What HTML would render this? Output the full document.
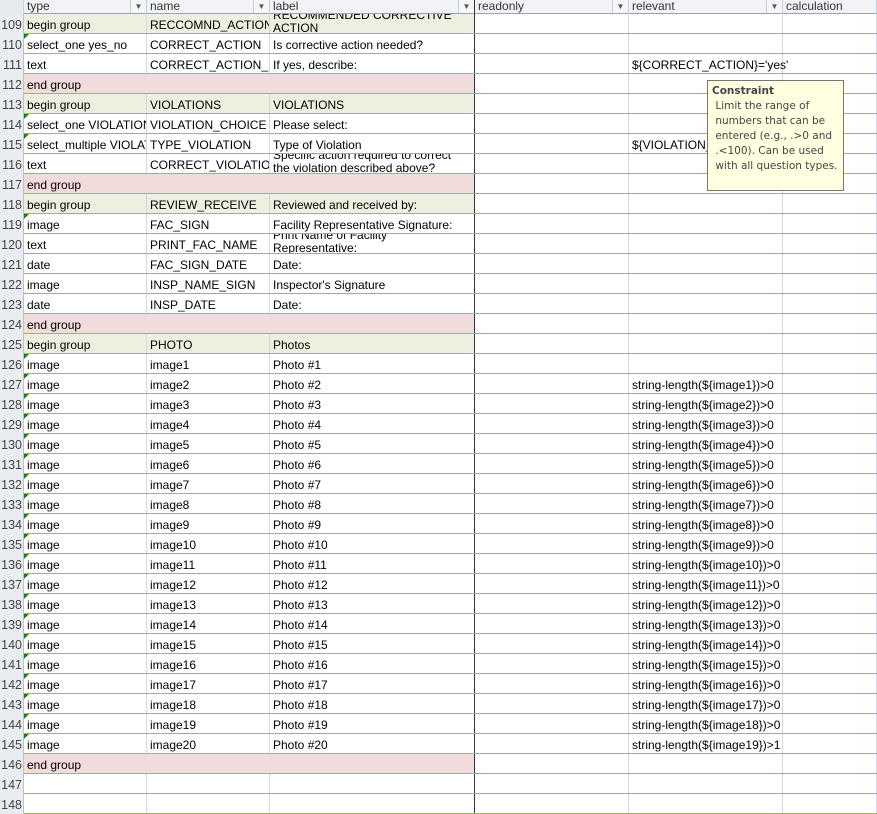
<!DOCTYPE html>
<html><head><meta charset="utf-8"><style>
body{margin:0;width:877px;height:806px;overflow:hidden;background:#fff;font-family:"Liberation Sans",Arial,sans-serif;font-size:12px;color:#000;position:relative}
.r{position:absolute;left:0;width:877px;height:20px;box-sizing:border-box;border-bottom:1px solid #9bbb59}
.c{position:absolute;top:0;height:19px;line-height:22px;box-sizing:border-box;border-right:1px solid #d5d9df;padding-left:3px;white-space:nowrap;overflow:hidden}
.h{left:0;width:24px;background:#e9ecf1;color:#444;font-size:12.5px;text-align:right;padding:0 1px 0 0;border-right:1px solid #b9c1cc;top:0;height:20px;line-height:23px}
.t{left:24px;width:123px}.n{left:147px;width:123px}.l{left:270px;width:205px;border-right:1px solid #333}
.ro{left:475px;width:154px}.rv{left:629px;width:154px;overflow:visible;z-index:1}.ca{left:783px;width:94px}
.bg .t,.bg .n,.bg .l{background:#ebf1de}
.eg .t,.eg .n,.eg .l{background:#f2dcdb}
.two{line-height:13px}
.two span{display:block;margin-top:-5px}
.tri{position:absolute;left:24px;top:0;width:0;height:0;border-top:5px solid #1e7a2a;border-right:5px solid transparent}
.hd{position:absolute;top:0;left:0;width:877px;height:14px;background:#f1f3f6;border-bottom:1px solid #9aa3ae;box-sizing:border-box;z-index:3}
.hc{position:absolute;top:0;height:14px;line-height:13px;box-sizing:border-box;border-right:1px solid #c8ced6;padding-left:3px;color:#333}
.dd{position:absolute;top:0;right:0;width:15px;height:13px;border-left:1px solid #c8ced6;background:#f5f6f8;font-size:8px;line-height:13px;text-align:center;color:#555}
.tip{position:absolute;z-index:5;left:707px;top:80px;width:137px;height:111px;background:#ffffe1;border:1px solid #767676;box-sizing:border-box;font-family:"DejaVu Sans",sans-serif;font-size:10.5px;line-height:15px;color:#444;padding:3px 4px}
</style></head><body>
<div class="hd">
<div class="hc" style="left:0;width:24px;background:#e6e9ee"></div>
<div class="hc" style="left:24px;width:123px">type<div class="dd">▼</div></div>
<div class="hc" style="left:147px;width:123px">name<div class="dd">▼</div></div>
<div class="hc" style="left:270px;width:205px;border-right:1px solid #333">label<div class="dd">▼</div></div>
<div class="hc" style="left:475px;width:154px">readonly<div class="dd">▼</div></div>
<div class="hc" style="left:629px;width:154px">relevant<div class="dd">▼</div></div>
<div class="hc" style="left:783px;width:94px">calculation</div>
</div>

<div class="r bg" style="top:14px"><div class="c h">109</div><div class="c t">begin group</div><div class="c n">RECCOMND_ACTION</div><div class="c l two"><span>RECOMMENDED CORRECTIVE<br>ACTION</span></div><div class="c ro"></div><div class="c ca"></div><div class="c rv"></div></div>
<div class="r" style="top:34px"><div class="c h">110</div><div class="c t">select_one yes_no</div><div class="tri"></div><div class="c n">CORRECT_ACTION</div><div class="c l">Is corrective action needed?</div><div class="c ro"></div><div class="c ca"></div><div class="c rv"></div></div>
<div class="r" style="top:54px"><div class="c h">111</div><div class="c t">text</div><div class="c n">CORRECT_ACTION_DESC</div><div class="c l">If yes, describe:</div><div class="c ro"></div><div class="c ca"></div><div class="c rv">${CORRECT_ACTION}='yes'</div></div>
<div class="r eg" style="top:74px"><div class="c h">112</div><div class="c t" style="width:451px;border-right:1px solid #333">end group</div><div class="c ro"></div><div class="c ca"></div><div class="c rv"></div></div>
<div class="r bg" style="top:94px"><div class="c h">113</div><div class="c t">begin group</div><div class="c n">VIOLATIONS</div><div class="c l">VIOLATIONS</div><div class="c ro"></div><div class="c ca"></div><div class="c rv"></div></div>
<div class="r" style="top:114px"><div class="c h">114</div><div class="c t">select_one VIOLATIONS</div><div class="tri"></div><div class="c n">VIOLATION_CHOICE</div><div class="c l">Please select:</div><div class="c ro"></div><div class="c ca"></div><div class="c rv"></div></div>
<div class="r" style="top:134px"><div class="c h">115</div><div class="c t">select_multiple VIOLATIONS</div><div class="tri"></div><div class="c n">TYPE_VIOLATION</div><div class="c l">Type of Violation</div><div class="c ro"></div><div class="c ca"></div><div class="c rv">${VIOLATION_CHOICE}</div></div>
<div class="r" style="top:154px"><div class="c h">116</div><div class="c t">text</div><div class="c n">CORRECT_VIOLATION</div><div class="c l two"><span>Specific action required to correct<br>the violation described above?</span></div><div class="c ro"></div><div class="c ca"></div><div class="c rv"></div></div>
<div class="r eg" style="top:174px"><div class="c h">117</div><div class="c t" style="width:451px;border-right:1px solid #333">end group</div><div class="c ro"></div><div class="c ca"></div><div class="c rv"></div></div>
<div class="r bg" style="top:194px"><div class="c h">118</div><div class="c t">begin group</div><div class="c n">REVIEW_RECEIVE</div><div class="c l">Reviewed and received by:</div><div class="c ro"></div><div class="c ca"></div><div class="c rv"></div></div>
<div class="r" style="top:214px"><div class="c h">119</div><div class="c t">image</div><div class="tri"></div><div class="c n">FAC_SIGN</div><div class="c l">Facility Representative Signature:</div><div class="c ro"></div><div class="c ca"></div><div class="c rv"></div></div>
<div class="r" style="top:234px"><div class="c h">120</div><div class="c t">text</div><div class="c n">PRINT_FAC_NAME</div><div class="c l two"><span>Print Name of Facility<br>Representative:</span></div><div class="c ro"></div><div class="c ca"></div><div class="c rv"></div></div>
<div class="r" style="top:254px"><div class="c h">121</div><div class="c t">date</div><div class="c n">FAC_SIGN_DATE</div><div class="c l">Date:</div><div class="c ro"></div><div class="c ca"></div><div class="c rv"></div></div>
<div class="r" style="top:274px"><div class="c h">122</div><div class="c t">image</div><div class="c n">INSP_NAME_SIGN</div><div class="c l">Inspector's Signature</div><div class="c ro"></div><div class="c ca"></div><div class="c rv"></div></div>
<div class="r" style="top:294px"><div class="c h">123</div><div class="c t">date</div><div class="c n">INSP_DATE</div><div class="c l">Date:</div><div class="c ro"></div><div class="c ca"></div><div class="c rv"></div></div>
<div class="r eg" style="top:314px"><div class="c h">124</div><div class="c t" style="width:451px;border-right:1px solid #333">end group</div><div class="c ro"></div><div class="c ca"></div><div class="c rv"></div></div>
<div class="r bg" style="top:334px"><div class="c h">125</div><div class="c t">begin group</div><div class="c n">PHOTO</div><div class="c l">Photos</div><div class="c ro"></div><div class="c ca"></div><div class="c rv"></div></div>
<div class="r" style="top:354px"><div class="c h">126</div><div class="c t">image</div><div class="tri"></div><div class="c n">image1</div><div class="c l">Photo #1</div><div class="c ro"></div><div class="c ca"></div><div class="c rv"></div></div>
<div class="r" style="top:374px"><div class="c h">127</div><div class="c t">image</div><div class="tri"></div><div class="c n">image2</div><div class="c l">Photo #2</div><div class="c ro"></div><div class="c ca"></div><div class="c rv">string-length(${image1})&gt;0</div></div>
<div class="r" style="top:394px"><div class="c h">128</div><div class="c t">image</div><div class="tri"></div><div class="c n">image3</div><div class="c l">Photo #3</div><div class="c ro"></div><div class="c ca"></div><div class="c rv">string-length(${image2})&gt;0</div></div>
<div class="r" style="top:414px"><div class="c h">129</div><div class="c t">image</div><div class="tri"></div><div class="c n">image4</div><div class="c l">Photo #4</div><div class="c ro"></div><div class="c ca"></div><div class="c rv">string-length(${image3})&gt;0</div></div>
<div class="r" style="top:434px"><div class="c h">130</div><div class="c t">image</div><div class="tri"></div><div class="c n">image5</div><div class="c l">Photo #5</div><div class="c ro"></div><div class="c ca"></div><div class="c rv">string-length(${image4})&gt;0</div></div>
<div class="r" style="top:454px"><div class="c h">131</div><div class="c t">image</div><div class="tri"></div><div class="c n">image6</div><div class="c l">Photo #6</div><div class="c ro"></div><div class="c ca"></div><div class="c rv">string-length(${image5})&gt;0</div></div>
<div class="r" style="top:474px"><div class="c h">132</div><div class="c t">image</div><div class="tri"></div><div class="c n">image7</div><div class="c l">Photo #7</div><div class="c ro"></div><div class="c ca"></div><div class="c rv">string-length(${image6})&gt;0</div></div>
<div class="r" style="top:494px"><div class="c h">133</div><div class="c t">image</div><div class="tri"></div><div class="c n">image8</div><div class="c l">Photo #8</div><div class="c ro"></div><div class="c ca"></div><div class="c rv">string-length(${image7})&gt;0</div></div>
<div class="r" style="top:514px"><div class="c h">134</div><div class="c t">image</div><div class="tri"></div><div class="c n">image9</div><div class="c l">Photo #9</div><div class="c ro"></div><div class="c ca"></div><div class="c rv">string-length(${image8})&gt;0</div></div>
<div class="r" style="top:534px"><div class="c h">135</div><div class="c t">image</div><div class="tri"></div><div class="c n">image10</div><div class="c l">Photo #10</div><div class="c ro"></div><div class="c ca"></div><div class="c rv">string-length(${image9})&gt;0</div></div>
<div class="r" style="top:554px"><div class="c h">136</div><div class="c t">image</div><div class="tri"></div><div class="c n">image11</div><div class="c l">Photo #11</div><div class="c ro"></div><div class="c ca"></div><div class="c rv">string-length(${image10})&gt;0</div></div>
<div class="r" style="top:574px"><div class="c h">137</div><div class="c t">image</div><div class="tri"></div><div class="c n">image12</div><div class="c l">Photo #12</div><div class="c ro"></div><div class="c ca"></div><div class="c rv">string-length(${image11})&gt;0</div></div>
<div class="r" style="top:594px"><div class="c h">138</div><div class="c t">image</div><div class="tri"></div><div class="c n">image13</div><div class="c l">Photo #13</div><div class="c ro"></div><div class="c ca"></div><div class="c rv">string-length(${image12})&gt;0</div></div>
<div class="r" style="top:614px"><div class="c h">139</div><div class="c t">image</div><div class="tri"></div><div class="c n">image14</div><div class="c l">Photo #14</div><div class="c ro"></div><div class="c ca"></div><div class="c rv">string-length(${image13})&gt;0</div></div>
<div class="r" style="top:634px"><div class="c h">140</div><div class="c t">image</div><div class="tri"></div><div class="c n">image15</div><div class="c l">Photo #15</div><div class="c ro"></div><div class="c ca"></div><div class="c rv">string-length(${image14})&gt;0</div></div>
<div class="r" style="top:654px"><div class="c h">141</div><div class="c t">image</div><div class="tri"></div><div class="c n">image16</div><div class="c l">Photo #16</div><div class="c ro"></div><div class="c ca"></div><div class="c rv">string-length(${image15})&gt;0</div></div>
<div class="r" style="top:674px"><div class="c h">142</div><div class="c t">image</div><div class="tri"></div><div class="c n">image17</div><div class="c l">Photo #17</div><div class="c ro"></div><div class="c ca"></div><div class="c rv">string-length(${image16})&gt;0</div></div>
<div class="r" style="top:694px"><div class="c h">143</div><div class="c t">image</div><div class="tri"></div><div class="c n">image18</div><div class="c l">Photo #18</div><div class="c ro"></div><div class="c ca"></div><div class="c rv">string-length(${image17})&gt;0</div></div>
<div class="r" style="top:714px"><div class="c h">144</div><div class="c t">image</div><div class="tri"></div><div class="c n">image19</div><div class="c l">Photo #19</div><div class="c ro"></div><div class="c ca"></div><div class="c rv">string-length(${image18})&gt;0</div></div>
<div class="r" style="top:734px"><div class="c h">145</div><div class="c t">image</div><div class="tri"></div><div class="c n">image20</div><div class="c l">Photo #20</div><div class="c ro"></div><div class="c ca"></div><div class="c rv">string-length(${image19})&gt;1</div></div>
<div class="r eg" style="top:754px"><div class="c h">146</div><div class="c t" style="width:451px;border-right:1px solid #333">end group</div><div class="c ro"></div><div class="c ca"></div><div class="c rv"></div></div>
<div class="r" style="top:774px"><div class="c h">147</div><div class="c t"></div><div class="c n"></div><div class="c l"></div><div class="c ro"></div><div class="c ca"></div><div class="c rv"></div></div>
<div class="r" style="top:794px"><div class="c h">148</div><div class="c t"></div><div class="c n"></div><div class="c l"></div><div class="c ro"></div><div class="c ca"></div><div class="c rv"></div></div>

<div class="tip"><b>Constraint</b><br>&nbsp;Limit the range of<br>&nbsp;numbers that can be<br>&nbsp;entered (e.g., .&gt;0 and<br>&nbsp;.&lt;100). Can be used<br>&nbsp;with all question types.</div>
</body></html>
